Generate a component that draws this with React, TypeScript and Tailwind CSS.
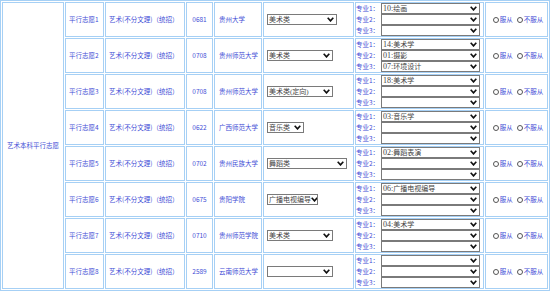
import React from "react";

type Row = {
  n: number;
  code: string;
  school: string;
  cat: string;
  catW: string;
  majors: string[];
};

const rows: Row[] = [
  { n: 1, code: "0681", school: "贵州大学", cat: "美术类", catW: "w-[70px]", majors: ["10:绘画", "", ""] },
  { n: 2, code: "0708", school: "贵州师范大学", cat: "美术类", catW: "w-[66px]", majors: ["14:美术学", "01:摄影", "07:环境设计"] },
  { n: 3, code: "0708", school: "贵州师范大学", cat: "美术类(定向)", catW: "w-[66px]", majors: ["18:美术学", "", ""] },
  { n: 4, code: "0622", school: "广西师范大学", cat: "音乐类", catW: "w-[37px]", majors: ["03:音乐学", "", ""] },
  { n: 5, code: "0702", school: "贵州民族大学", cat: "舞蹈类", catW: "w-[80px]", majors: ["02:舞蹈表演", "", ""] },
  { n: 6, code: "0675", school: "贵阳学院", cat: "广播电视编导", catW: "w-[51px]", majors: ["06:广播电视编导", "", ""] },
  { n: 7, code: "0710", school: "贵州师范学院", cat: "美术类", catW: "w-[66px]", majors: ["04:美术学", "", ""] },
  { n: 8, code: "2589", school: "云南师范大学", cat: "", catW: "w-[66px]", majors: ["", "", ""] },
];

const font = { fontFamily: '"Liberation Serif", "Noto Sans CJK SC", serif' };

function Chevron() {
  return (
    <svg width="7" height="5" viewBox="0 0 7 5" className="shrink-0">
      <path d="M0.7 0.7 L3.5 3.9 L6.3 0.7" fill="none" stroke="#111" strokeWidth="1.6" />
    </svg>
  );
}

function Sel({ text, w }: { text: string; w: string }) {
  return (
    <div
      className={`${w} h-[11px] shrink-0 flex items-center justify-between border border-[#7a7a7a] bg-white pl-[1px] pr-[2px] text-[7px] leading-none text-[#444] overflow-hidden whitespace-nowrap`}
    >
      <span className="pt-[1px] [&>b]:text-[8px] [&>b]:font-normal">
        {text.split(/([0-9:]+)/).map((p, i) => (/^[0-9:]+$/.test(p) ? <b key={i}>{p}</b> : <React.Fragment key={i}>{p}</React.Fragment>))}
      </span>
      <Chevron />
    </div>
  );
}

function Radio() {
  return <span className="inline-block w-[6px] h-[6px] rounded-full border border-[#555] bg-white mr-[1px]" />;
}

const cell = "border border-[#a6d0f5] bg-white flex items-center";

export default function App() {
  return (
    <div
      className="w-[550px] h-[291px] bg-white border border-[#a6d0f5] p-[1px] grid grid-cols-[62px_39px_80px_27px_48px_91px_129px_63px] grid-rows-[repeat(8,35px)] gap-[1px] text-[6.5px] leading-none text-[#3f4ed6]"
      style={{ fontFamily: '"Noto Sans CJK SC", sans-serif' }}
    >
      <div className={`${cell} justify-center row-span-8 col-start-1 row-start-1`}>艺术本科平行志愿</div>
      {rows.map((r) => (
        <React.Fragment key={r.n}>
          <div className={`${cell} pl-[3px] col-start-2`}>平行志愿{r.n}</div>
          <div className={`${cell} pl-[3px]`}>艺术(不分文理)（统招）</div>
          <div className={`${cell} justify-center`}>{r.code}</div>
          <div className={`${cell} pl-[4px]`}>{r.school}</div>
          <div className={`${cell} pl-[3px]`} style={font}>
            <Sel text={r.cat} w={r.catW} />
          </div>
          <div className={`${cell} flex-col justify-center items-start`}>
            {r.majors.map((m, i) => (
              <div key={i} className="flex items-center h-[11px]">
                <span className="w-[25px] shrink-0">专业{i + 1}：</span>
                <div style={font}>
                  <Sel text={m} w="w-[99px]" />
                </div>
              </div>
            ))}
          </div>
          <div className={`${cell} justify-center whitespace-nowrap pl-[3px]`}>
            <Radio />
            <span>服从</span>
            <span className="w-[4px]" />
            <Radio />
            <span>不服从</span>
          </div>
        </React.Fragment>
      ))}
    </div>
  );
}
